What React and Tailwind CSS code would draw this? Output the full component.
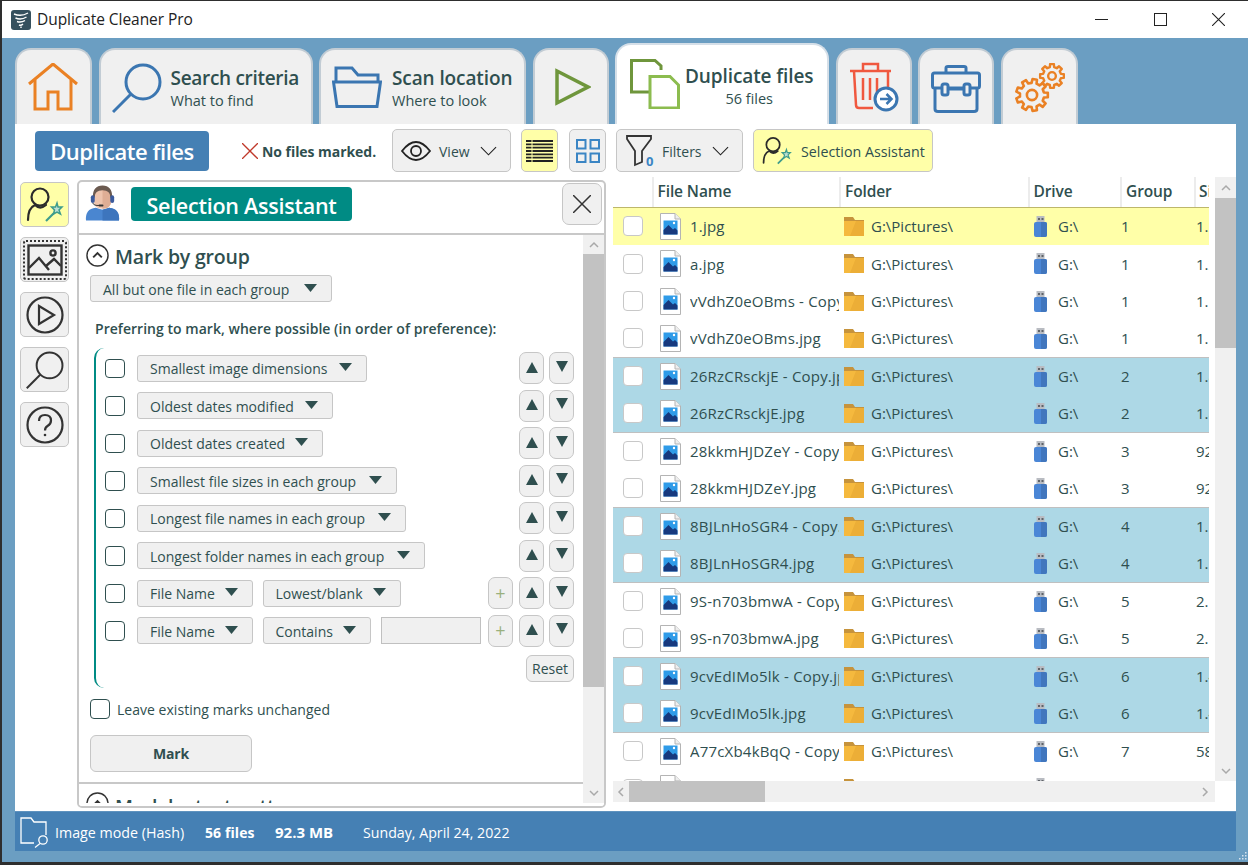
import React from "react";

const FONT = "[font-family:'Open_Sans','Noto_Sans',sans-serif]";
const INK = "text-[#2f4f4f]";
const BTN = "bg-[#f0f0f0] border border-[#c6c6c6] rounded-[5px]";

function Caret() {
  return (
    <svg viewBox="0 0 13 8" className="w-[13px] h-[8px] shrink-0 -mt-[2px]">
      <path d="M0 0H13L6.5 8Z" fill="#2f4f4f" />
    </svg>
  );
}
function Tri({ up }) {
  return (
    <svg viewBox="0 0 12 11" className={"w-[12px] h-[11px] shrink-0 " + (up ? "-mt-[2px]" : "-mt-[4px]")}>
      <path d={up ? "M6 0L12 11H0Z" : "M0 0H12L6 11Z"} fill="#2f4f4f" />
    </svg>
  );
}

function Gear({ cx, cy, r, teeth = 8, color = "#ea8124", w = 2 }) {
  const pts = [];
  const outer = r;
  const inner = r * 0.76;
  const step = (Math.PI * 2) / teeth;
  for (let i = 0; i < teeth; i++) {
    const a = i * step;
    const d = step * 0.2;
    const e = step * 0.3;
    pts.push([a - e, inner], [a - d, outer], [a + d, outer], [a + e, inner]);
  }
  const s = pts.map(([a, q]) => `${(cx + q * Math.cos(a)).toFixed(2)},${(cy + q * Math.sin(a)).toFixed(2)}`).join(" ");
  return (
    <g fill="none" stroke={color} strokeWidth={w} strokeLinejoin="round">
      <polygon points={s} />
      <circle cx={cx} cy={cy} r={r * 0.32} />
    </g>
  );
}

const HomeIcon = () => (
  <svg viewBox="0 0 50 48" className="w-[50px] h-[48px]" fill="none" stroke="#ea8124" strokeWidth="3">
    <path d="M1 21L25 1L49 21" />
    <path d="M7 17V46H20V29H30V46H43V17" />
  </svg>
);
const SearchIcon = ({ color = "#3b76b1", cls = "w-[50px] h-[50px]", w = 3 }) => (
  <svg viewBox="0 0 50 50" className={cls} fill="none" stroke={color} strokeWidth={w}>
    <circle cx="31" cy="19" r="17" />
    <path d="M19 31L1 49" />
  </svg>
);
const FolderIcon = () => (
  <svg viewBox="0 0 50 42" className="w-[50px] h-[42px]" fill="none" stroke="#3b76b1" strokeWidth="3">
    <path d="M4 16V2H20L26 9H46V16" />
    <path d="M1.5 16H48.5L45 40.5H5Z" />
  </svg>
);
const PlayIcon = () => (
  <svg viewBox="0 0 36 38" className="w-[36px] h-[38px]" fill="none" stroke="#6f963c" strokeWidth="3.5">
    <path d="M2 3L33 19L2 35Z" />
  </svg>
);
const DocsIcon = () => (
  <svg viewBox="0 0 50 50" className="w-[50px] h-[50px]" fill="none" strokeWidth="3">
    <path d="M31 11V7L25 1.5H1.5V33H19" stroke="#6f963c" />
    <path d="M20 17.5H40L48.5 26V49H20Z" stroke="#8cbc4f" fill="white" />
  </svg>
);
const TrashIcon = () => (
  <svg viewBox="0 0 50 50" className="w-[50px] h-[50px]" fill="none">
    <g stroke="#f0583f" strokeWidth="2.5">
      <path d="M1 9H42" />
      <path d="M14 9V2H29V9" />
      <path d="M5 9L7 43Q7 46 10 46H24" />
      <path d="M39 9V25" />
      <path d="M14 16V38M21 16V38M28 16V30" />
    </g>
    <circle cx="37" cy="37" r="11" fill="white" stroke="#3b76b1" strokeWidth="3" />
    <path d="M31 37H42M37.5 32L42.5 37L37.5 42" stroke="#3b76b1" strokeWidth="2.5" />
  </svg>
);
const CaseIcon = () => (
  <svg viewBox="0 0 50 48" className="w-[50px] h-[48px]" fill="none" stroke="#3b76b1" strokeWidth="3">
    <path d="M15 8V3Q15 1.5 17 1.5H33Q35 1.5 35 3V8" />
    <rect x="1.5" y="8" width="47" height="15" rx="2" />
    <path d="M4 23V44Q4 46.5 7 46.5H43Q46 46.5 46 44V23" />
    <rect x="11" y="19" width="6" height="11" rx="2" fill="#f0f0f0" />
    <rect x="33" y="19" width="6" height="11" rx="2" fill="#f0f0f0" />
    <path d="M17 24H33" />
  </svg>
);
const GearsIcon = () => (
  <svg viewBox="0 0 50 50" className="w-[50px] h-[50px]">
    <Gear cx={17} cy={32} r={16} teeth={9} w={2.6} />
    <Gear cx={37} cy={13} r={12} teeth={8} w={2.4} />
  </svg>
);

function Tab({ w, active, children }) {
  return (
    <div className={w + " shrink-0 border-2 border-b-0 rounded-t-[16px] flex items-start " + (active ? "h-[81px] bg-white border-[#d5dfe8]" : "h-[76px] bg-[#f0f0f0] border-[#c2ccd4]")}>
      {children}
    </div>
  );
}

const Wizard = ({ cls }) => (
  <svg viewBox="0 0 38 36" className={cls} fill="none">
    <circle cx="14" cy="10" r="8.5" stroke="#2b2b2b" strokeWidth="2.2" />
    <path d="M2 33Q2 21 9 18Q14 23 20 18" stroke="#2b2b2b" strokeWidth="2.2" strokeLinecap="round" />
    <path d="M20 34L28 26" stroke="#3e9c8c" strokeWidth="2.2" />
    <path d="M31 16L32 20L36 20L33 23L34.5 27L31 25L27.5 27L28.5 23L25.5 20L29.5 20Z" stroke="#3e9c8c" strokeWidth="1.5" fill="#bde0d4" />
  </svg>
);
const ImageIcon = () => (
  <svg viewBox="0 0 36 32" className="w-[36px] h-[32px]" fill="none" stroke="#333" strokeWidth="2.4">
    <rect x="1.5" y="1.5" width="33" height="29" />
    <circle cx="26" cy="9" r="2.6" />
    <path d="M2 24L12 14L22 26M19 22L27 15L34 22" />
  </svg>
);
const PlayCircle = () => (
  <svg viewBox="0 0 38 38" className="w-[38px] h-[38px]" fill="none" stroke="#333" strokeWidth="2.2">
    <circle cx="19" cy="19" r="17.5" />
    <path d="M13 10L28 19L13 28Z" />
  </svg>
);
const HelpCircle = () => (
  <svg viewBox="0 0 38 38" className="w-[38px] h-[38px]" fill="none" stroke="#333" strokeWidth="2.2">
    <circle cx="19" cy="19" r="17.5" />
    <path d="M13 15Q13 9 19 9Q25 9 25 14.5Q25 18 21.5 20Q19 21.5 19 24.5" />
    <circle cx="19" cy="29" r="1.3" fill="#333" stroke="none" />
  </svg>
);
const Agent = () => (
  <svg viewBox="0 0 36 36" className="w-[35px] h-[36px]">
    <path d="M1 36Q0 24 11 23L18 25L25 23Q36 24 35 36Z" fill="#4a86d0" />
    <path d="M18 25L25 23Q36 24 35 36H18Z" fill="#3d75bd" />
    <path d="M9 11Q9 1 18 1Q27 1 27 11V15Q27 24 18 24Q9 24 9 15Z" fill="#eec4ad" />
    <path d="M18 1Q27 1 27 11V15Q27 24 18 24Z" fill="#dfae95" />
    <path d="M8 12Q8 0 18 0Q28 0 28 12H26Q26 5 18 5Q10 5 10 12Z" fill="#6b5a50" />
    <rect x="6" y="10" width="4" height="8" rx="2" fill="#3a5a9c" />
    <rect x="26" y="10" width="4" height="8" rx="2" fill="#3a5a9c" />
    <path d="M8 18Q9 21 15 20.5" stroke="#333" strokeWidth="1" fill="none" />
    <rect x="14" y="19.5" width="5" height="2" rx="1" fill="#333" />
  </svg>
);
const ChevCircle = () => (
  <svg viewBox="0 0 24 24" className="w-[23px] h-[23px] shrink-0" fill="none" stroke="#333" strokeWidth="1.5">
    <circle cx="12" cy="12" r="11" />
    <path d="M7.5 14L12 9.5L16.5 14" strokeWidth="2" />
  </svg>
);
const Chevron = ({ dir = "up", color = "#a9a9a9", cls = "w-[10px] h-[10px]" }) => {
  const d = { up: "M1 7L5 3L9 7", down: "M1 3L5 7L9 3", left: "M7 1L3 5L7 9", right: "M3 1L7 5L3 9" }[dir];
  return (
    <svg viewBox="0 0 10 10" className={cls} fill="none" stroke={color} strokeWidth="1.5">
      <path d={d} />
    </svg>
  );
};
const FileImg = () => (
  <svg viewBox="0 0 21 27" className="w-[21px] h-[27px] shrink-0">
    <path d="M.5.5H15L20.5 6V26.5H.5Z" fill="#fff" stroke="#b4b4b4" />
    <path d="M15 .5V6H20.5" fill="#eee" stroke="#b4b4b4" />
    <rect x="3.5" y="7.5" width="14" height="14" fill="#2f9be8" />
    <path d="M3.5 21.5V17L8.5 12L13 16.5L15 15L17.5 17.5V21.5Z" fill="#17397e" />
    <circle cx="14" cy="10" r="1.2" fill="#fff" />
  </svg>
);
const FolderYellow = () => (
  <svg viewBox="0 0 20 19" className="w-[20px] h-[19px] shrink-0">
    <path d="M0 0H9L11 3H20V6H0Z" fill="#c6933c" />
    <rect y="4" width="20" height="15" fill="#f5b93e" />
    <path d="M12 4H20V19H6Z" fill="#ecae37" />
  </svg>
);
const Usb = () => (
  <svg viewBox="0 0 13 21" className="w-[13px] h-[21px] shrink-0">
    <rect x="2.5" y="0" width="8" height="7" fill="#b9bcc2" />
    <rect x="4" y="2" width="2" height="2" fill="#5f6368" />
    <rect x="7.5" y="2" width="2" height="2" fill="#5f6368" />
    <path d="M0 8Q0 6 2 6H11Q13 6 13 8V19Q13 21 11 21H2Q0 21 0 19Z" fill="#4a86d6" />
    <path d="M7 6H11Q13 6 13 8V19Q13 21 11 21H7Z" fill="#4176bd" />
  </svg>
);

function Dropdown({ w, children }) {
  return (
    <div className={w + " h-[27px] shrink-0 flex items-center justify-between pl-[12px] pr-[14px] bg-[#f0f0f0] border border-[#c6c6c6] rounded-[3px] text-[14px] whitespace-nowrap " + INK}>
      <span className="pt-[1px]">{children}</span>
      <Caret />
    </div>
  );
}
const Check = () => <div className="w-[19.5px] h-[19.5px] shrink-0 bg-white border-[1.5px] border-[#2f4f4f] rounded-[4px]" />;

function Arrows({ plus }) {
  const b = "w-[25px] h-[32px] shrink-0 flex items-center justify-center " + BTN + " rounded-[7px]";
  return (
    <div className="ml-auto flex items-center gap-[5px]">
      {plus && <div className={b + " mr-[1px] text-[18px] text-[#9ab07e]"}>+</div>}
      <div className={b}><Tri up /></div>
      <div className={b}><Tri /></div>
    </div>
  );
}

const rules = [
  ["w-[230px]", "Smallest image dimensions"],
  ["w-[196px]", "Oldest dates modified"],
  ["w-[186px]", "Oldest dates created"],
  ["w-[260px]", "Smallest file sizes in each group"],
  ["w-[269px]", "Longest file names in each group"],
  ["w-[288px]", "Longest folder names in each group"],
];

const files = [
  ["1.jpg", 1, "1.2 MB", "y", ""],
  ["a.jpg", 1, "1.2 MB", "", ""],
  ["vVdhZ0eOBms - Copy.jpg", 1, "1.1 MB", "", ""],
  ["vVdhZ0eOBms.jpg", 1, "1.1 MB", "", "l"],
  ["26RzCRsckjE - Copy.jpg", 2, "1.8 MB", "b", ""],
  ["26RzCRsckjE.jpg", 2, "1.8 MB", "b", "l"],
  ["28kkmHJDZeY - Copy.jpg", 3, "92 KB", "", ""],
  ["28kkmHJDZeY.jpg", 3, "92 KB", "", "l"],
  ["8BJLnHoSGR4 - Copy.jpg", 4, "1.5 MB", "b", ""],
  ["8BJLnHoSGR4.jpg", 4, "1.5 MB", "b", "l"],
  ["9S-n703bmwA - Copy.jpg", 5, "2.1 MB", "", ""],
  ["9S-n703bmwA.jpg", 5, "2.1 MB", "", "l"],
  ["9cvEdIMo5lk - Copy.jpg", 6, "1.4 MB", "b", ""],
  ["9cvEdIMo5lk.jpg", 6, "1.4 MB", "b", "l"],
  ["A77cXb4kBqQ - Copy.jpg", 7, "58 KB", "", ""],
  ["A77cXb4kBqQ.jpg", 7, "58 KB", "", ""],
];

function Row({ f }) {
  const bg = f[3] === "y" ? "bg-[#ffffa8]" : f[3] === "b" ? "bg-[#add8e6]" : "bg-white";
  return (
    <div className={"h-[37.5px] shrink-0 flex items-center text-[15px] whitespace-nowrap " + bg + " " + INK + (f[4] ? " border-b border-[#c0c0c0]" : "")}>
      <div className="w-[47px] shrink-0 pl-[10px]">
        <div className="w-[20px] h-[20px] bg-white border border-[#c8c8c8] rounded-[4px]" />
      </div>
      <FileImg />
      <div className="w-[149px] shrink-0 ml-[9px] mr-[5px] overflow-hidden tracking-[0.2px]">{f[0]}</div>
      <div className="w-[187px] shrink-0 flex items-center gap-[7px] overflow-hidden">
        <FolderYellow />
        <span>G:\Pictures\</span>
      </div>
      <div className="w-[90px] shrink-0 pl-[3px] flex items-center gap-[11px]">
        <Usb />
        <span>G:\</span>
      </div>
      <div className="w-[75px] shrink-0">{f[1]}</div>
      <div className="w-[40px] shrink-0">{f[2]}</div>
    </div>
  );
}

export default function App() {
  return (
    <div className={"w-[1248px] h-[865px] overflow-hidden flex flex-col bg-[#6b9ec2] border-t border-l-2 border-b-[3px] border-[#2e2e2e] " + FONT}>
      {/* title bar */}
      <div className="h-[37px] shrink-0 bg-white flex items-center pl-[9px] pr-[23px] text-[#222]">
        <svg viewBox="0 0 20 20" className="w-[20px] h-[20px]">
          <rect width="20" height="20" rx="3" fill="#35505e" />
          <path d="M3 4Q10 7 17 3M4.5 8Q10 10.5 15.5 7M6 11.5Q10 13 14 10.5M8 15Q10 16 12 14M10 16.5V18" stroke="#fff" strokeWidth="1.4" fill="none" />
        </svg>
        <span className="ml-[6px] text-[15.5px] tracking-[-0.05px]">Duplicate Cleaner Pro</span>
        <div className="ml-auto flex items-center gap-[45.5px]">
          <div className="w-[13px] h-[1.5px] bg-[#222]" />
          <div className="w-[13px] h-[13px] border border-[#222]" />
          <svg viewBox="0 0 13 13" className="w-[13px] h-[13px]" stroke="#222" strokeWidth="1.1"><path d="M0 0L13 13M13 0L0 13" /></svg>
        </div>
      </div>

      {/* tabs */}
      <div className="h-[86px] shrink-0 flex items-end gap-[6.5px] pl-[13px]">
        <Tab w="w-[77px]"><div className="ml-[11px] mt-[13px]"><HomeIcon /></div></Tab>
        <Tab w="w-[214px]">
          <div className="ml-[11px] mt-[12px]"><SearchIcon cls="w-[50px] h-[52px]" /></div>
          <div className={"ml-[9px] mt-[15px] " + INK}>
            <div className="text-[19px] font-semibold leading-[26px] tracking-[-0.3px] whitespace-nowrap">Search criteria</div>
            <div className="text-[14.5px] leading-[19px] whitespace-nowrap">What to find</div>
          </div>
        </Tab>
        <Tab w="w-[207px]">
          <div className="ml-[11px] mt-[16px]"><FolderIcon /></div>
          <div className={"ml-[10px] mt-[15px] " + INK}>
            <div className="text-[19px] font-semibold leading-[26px] tracking-[-0.1px] whitespace-nowrap">Scan location</div>
            <div className="text-[14.5px] leading-[19px] whitespace-nowrap">Where to look</div>
          </div>
        </Tab>
        <Tab w="w-[76px]"><div className="ml-[20px] mt-[18px]"><PlayIcon /></div></Tab>
        <Tab w="w-[214px]" active>
          <div className="ml-[13px] mt-[14px]"><DocsIcon /></div>
          <div className={"ml-[5px] mt-[18px] text-center " + INK}>
            <div className="text-[19px] font-semibold leading-[26px] tracking-[-0.1px] whitespace-nowrap">Duplicate files</div>
            <div className="text-[14.5px] leading-[20px] whitespace-nowrap">56 files</div>
          </div>
        </Tab>
        <Tab w="w-[76px]"><div className="ml-[11px] mt-[12px]"><TrashIcon /></div></Tab>
        <Tab w="w-[76px]"><div className="ml-[11px] mt-[15px]"><CaseIcon /></div></Tab>
        <Tab w="w-[77px]"><div className="ml-[12px] mt-[13px]"><GearsIcon /></div></Tab>
      </div>

      {/* content */}
      <div className="w-[1221px] ml-[13px] h-[687px] shrink-0 bg-white flex flex-col">
        {/* toolbar */}
        <div className="h-[53px] shrink-0 flex items-center pl-[20px]">
          <div className="w-[174px] h-[40px] pt-[2px] flex items-center justify-center bg-[#4580b4] rounded-[4px] text-white text-[22px] font-semibold tracking-[-0.45px] whitespace-nowrap">Duplicate files</div>
          <svg viewBox="0 0 16 16" className="w-[16px] h-[16px] ml-[33px]" stroke="#c0392b" strokeWidth="1.3"><path d="M0 0L16 16M16 0L0 16" /></svg>
          <span className={"ml-[4px] w-[115px] pt-[1px] text-[14px] font-bold tracking-[-0.05px] whitespace-nowrap " + INK}>No files marked.</span>
          <div className={"ml-[15px] w-[119px] h-[43px] flex items-center pl-[8px] " + BTN + " " + INK}>
            <svg viewBox="0 0 30 20" className="w-[30px] h-[20px]" fill="none" stroke="#222" strokeWidth="1.8">
              <path d="M1 10Q8 1 15 1Q22 1 29 10Q22 19 15 19Q8 19 1 10Z" />
              <circle cx="15" cy="10" r="5" />
            </svg>
            <span className="ml-[8px] pt-[2px] text-[14px]">View</span>
            <svg viewBox="0 0 18 10" className="w-[17px] h-[10px] ml-[10px]" fill="none" stroke="#222" strokeWidth="1.2"><path d="M1 1L9 9L17 1" /></svg>
          </div>
          <div className="ml-[10px] w-[37px] h-[43px] flex items-center justify-center bg-[#ffffa8] border border-[#c6c6c6] rounded-[5px]">
            <svg viewBox="0 0 27 22" className="w-[27px] h-[22px]" stroke="#222" strokeWidth="1.8">
              <path d="M0 1H27M0 4.3H27M0 7.7H27M0 11H27M0 14.3H27M0 17.7H27M0 21H27" />
              <path d="M6 0V22" stroke="#ffffa8" strokeWidth="1" />
            </svg>
          </div>
          <div className={"ml-[11px] w-[37px] h-[43px] flex items-center justify-center " + BTN}>
            <svg viewBox="0 0 24 24" className="w-[24px] h-[24px]" fill="none" stroke="#3a85c4" strokeWidth="2">
              <rect x="1" y="1" width="8.5" height="8.5" />
              <rect x="14.5" y="1" width="8.5" height="8.5" />
              <rect x="1" y="14.5" width="8.5" height="8.5" />
              <rect x="14.5" y="14.5" width="8.5" height="8.5" />
            </svg>
          </div>
          <div className={"ml-[10px] w-[127px] h-[43px] flex items-center pl-[9px] " + BTN + " " + INK}>
            <svg viewBox="0 0 29 32" className="w-[29px] h-[32px]" fill="none">
              <path d="M1 1H25V4L16 16V27L9 30V16L1 4Z" stroke="#333" strokeWidth="1.8" />
              <text x="20" y="31" fontSize="13" fontWeight="700" fill="#3a85c4">0</text>
            </svg>
            <span className="ml-[7px] pt-[2px] text-[14px]">Filters</span>
            <svg viewBox="0 0 18 10" className="w-[17px] h-[10px] ml-[10px]" fill="none" stroke="#222" strokeWidth="1.2"><path d="M1 1L9 9L17 1" /></svg>
          </div>
          <div className={"ml-[10px] w-[180px] h-[43px] flex items-center pl-[8px] bg-[#ffffa8] border border-[#c6c6c6] rounded-[5px] " + INK}>
            <Wizard cls="w-[30px] h-[30px]" />
            <span className="ml-[9px] pt-[2px] text-[14.25px] whitespace-nowrap">Selection Assistant</span>
          </div>
        </div>

        {/* main */}
        <div className="flex-1 min-h-0 flex pl-[5px]">
          {/* side */}
          <div className="w-[49px] shrink-0 pt-[5px] flex flex-col gap-[10px]">
            <div className="h-[45px] flex items-center justify-center bg-[#ffffa8] border border-[#c6c6c6] rounded-[5px]"><Wizard cls="w-[38px] h-[36px]" /></div>
            <div className={"h-[45px] flex items-center justify-center " + BTN}>
              <div className="p-[2px] border-2 border-dotted border-[#333] rounded-[3px] flex"><ImageIcon /></div>
            </div>
            <div className={"h-[45px] flex items-center justify-center " + BTN}><PlayCircle /></div>
            <div className={"h-[45px] flex items-center justify-center " + BTN}><SearchIcon color="#333" cls="w-[38px] h-[38px]" w={2.6} /></div>
            <div className={"h-[45px] flex items-center justify-center " + BTN}><HelpCircle /></div>
          </div>

          {/* selection panel */}
          <div className="ml-[8px] mt-[3px] w-[529px] h-[628px] shrink-0 border-2 border-[#c8c8c8] rounded-[5px] flex flex-col overflow-hidden">
            <div className="h-[53px] shrink-0 border-b-2 border-[#c8c8c8] flex items-start pl-[6px] pr-[2px]">
              <div className="mt-[3px]"><Agent /></div>
              <div className="mt-[5px] pt-[4px] ml-[11px] w-[221px] h-[34px] flex items-center justify-center bg-[#008b84] rounded-[4px] text-white text-[21.5px] font-semibold tracking-[-0.25px] whitespace-nowrap">Selection Assistant</div>
              <div className="mt-[1px] ml-auto w-[40px] h-[42px] flex items-center justify-center bg-[#f0f0f0] border border-[#c6c6c6] rounded-[7px]">
                <svg viewBox="0 0 18 18" className="w-[18px] h-[18px]" stroke="#333" strokeWidth="1.5"><path d="M0 0L18 18M18 0L0 18" /></svg>
              </div>
            </div>
            <div className="flex-1 min-h-0 flex">
              <div className="flex-1 min-w-0 overflow-hidden">
                <div className="flex items-center pl-[7px] pt-[9px] h-[32px]">
                  <ChevCircle />
                  <span className={"ml-[6px] pt-[2px] text-[19.5px] font-semibold tracking-[-0.2px] whitespace-nowrap " + INK}>Mark by group</span>
                </div>
                <div className={"ml-[11px] mt-[8px] w-[242px] h-[27px] flex items-center justify-between pl-[12px] pr-[14px] bg-[#f0f0f0] border border-[#c6c6c6] rounded-[3px] text-[14px] whitespace-nowrap " + INK}>
                  <span className="pt-[1px]">All but one file in each group</span>
                  <Caret />
                </div>
                <div className={"ml-[16px] mt-[16px] h-[20px] flex items-center text-[14px] font-semibold tracking-[0.03px] whitespace-nowrap " + INK}>Preferring to mark, where possible (in order of preference):</div>

                <div className="ml-[15px] mt-[10px] h-[340px] border-l-2 border-[#008b84] rounded-l-[10px] pt-[1.5px] pl-[9px] pr-[9px] flex flex-col">
                  {rules.map(([w, t]) => (
                    <div key={t} className="h-[37.5px] shrink-0 flex items-center gap-[12.5px]">
                      <Check />
                      <Dropdown w={w}>{t}</Dropdown>
                      <Arrows />
                    </div>
                  ))}
                  <div className="h-[37.5px] shrink-0 flex items-center gap-[12.5px]">
                    <Check />
                    <Dropdown w="w-[116px]">File Name</Dropdown>
                    <div className="-ml-[3px]"><Dropdown w="w-[138px]">Lowest/blank</Dropdown></div>
                    <Arrows plus />
                  </div>
                  <div className="h-[37.5px] shrink-0 flex items-center gap-[12.5px]">
                    <Check />
                    <Dropdown w="w-[116px]">File Name</Dropdown>
                    <div className="-ml-[3px]"><Dropdown w="w-[108px]">Contains</Dropdown></div>
                    <div className="-ml-[2.5px] -mr-[12.5px] w-[100px] h-[27px] shrink-0 bg-[#f0f0f0] border border-[#c0c0c0]" />
                    <Arrows plus />
                  </div>
                  <div className="flex justify-end mt-[5px]">
                    <div className={"w-[48px] h-[27px] pt-[1px] flex items-center justify-center text-[14px] rounded-[6px] " + BTN + " " + INK}>Reset</div>
                  </div>
                </div>

                <div className="ml-[11px] mt-[11px] flex items-center h-[20px]">
                  <Check />
                  <span className={"ml-[7.5px] pt-[1px] text-[14px] tracking-[0.03px] whitespace-nowrap " + INK}>Leave existing marks unchanged</span>
                </div>
                <div className={"ml-[11px] mt-[16px] w-[162px] h-[37px] flex items-center justify-center text-[14px] font-bold tracking-[-0.2px] rounded-[6px] " + BTN + " " + INK}>Mark</div>
                <div className="mt-[10px] border-t-2 border-[#c8c8c8] pl-[7px] pt-[8px] flex items-start">
                  <ChevCircle />
                  <span className={"ml-[6px] text-[19.5px] font-semibold tracking-[-0.2px] whitespace-nowrap " + INK}>Mark by text pattern</span>
                </div>
              </div>
              {/* scrollbar */}
              <div className="w-[21px] shrink-0 bg-[#f0f0f0] flex flex-col">
                <div className="h-[19px] shrink-0 flex items-center justify-center"><Chevron dir="up" /></div>
                <div className="h-[433px] shrink-0 bg-[#c2c2c2]" />
                <div className="flex-1" />
                <div className="h-[20px] shrink-0 flex items-center justify-center"><Chevron dir="down" /></div>
              </div>
            </div>
            <div className="h-[3px] shrink-0 bg-white" />
          </div>

          {/* grid */}
          <div className="ml-[7px] w-[623px] shrink-0 flex flex-col">
            <div className="h-[604px] shrink-0 flex">
              <div className="w-[596px] shrink-0 overflow-hidden flex flex-col">
                <div className={"h-[30.5px] shrink-0 flex items-center border-b border-[#bdb76b] text-[15.5px] font-semibold tracking-[-0.1px] whitespace-nowrap " + INK}>
                  <div className="w-[41px] shrink-0 h-full border-r-2 border-[#ececec]" />
                  <div className="w-[187px] shrink-0 pl-[3.5px] h-full flex items-center border-r-2 border-[#ececec]">File Name</div>
                  <div className="w-[189px] shrink-0 pl-[4px] h-full flex items-center border-r-2 border-[#ececec]">Folder</div>
                  <div className="w-[92px] shrink-0 pl-[3.5px] h-full flex items-center border-r-2 border-[#ececec]">Drive</div>
                  <div className="w-[74px] shrink-0 pl-[4px] h-full flex items-center border-r-2 border-[#ececec]">Group</div>
                  <div className="pl-[3px]">Size</div>
                </div>
                <div className="flex-1 min-h-0 overflow-hidden">
                  {files.map((f) => <Row key={f[0]} f={f} />)}
                </div>
              </div>
              <div className="ml-[6px] w-[21px] shrink-0 bg-[#f0f0f0] flex flex-col">
                <div className="h-[21px] shrink-0 flex items-center justify-center"><Chevron dir="up" /></div>
                <div className="h-[150px] shrink-0 bg-[#c2c2c2]" />
                <div className="flex-1" />
                <div className="h-[21px] shrink-0 flex items-center justify-center"><Chevron dir="down" /></div>
              </div>
            </div>
            <div className="h-[21px] w-[602px] shrink-0 bg-[#f0f0f0] flex items-center">
              <div className="w-[16px] shrink-0 flex justify-center"><Chevron dir="left" /></div>
              <div className="w-[136px] h-full shrink-0 bg-[#c2c2c2]" />
              <div className="ml-auto w-[21px] flex justify-center"><Chevron dir="right" /></div>
            </div>
          </div>
        </div>
      </div>

      {/* status */}
      <div className="w-[1221px] ml-[13px] h-[40px] shrink-0 bg-[#4580b4] border-t border-[#5f93bf] flex items-center pl-[5px] text-white text-[14px] whitespace-nowrap">
        <svg viewBox="0 0 30 32" className="w-[30px] h-[32px]" fill="none" stroke="#fff" strokeWidth="1.3">
          <path d="M14 27H1V2H11L14 6H26V19" />
          <circle cx="23" cy="24" r="4.2" />
          <path d="M20 27.5L15 31.5" />
        </svg>
        <span className="ml-[5px] pt-[2px] w-[150px] text-[14.25px]">Image mode (Hash)</span>
        <span className="w-[70px] pt-[2px] font-bold tracking-[0.1px]">56 files</span>
        <span className="w-[88px] pt-[2px] text-[15px] font-bold">92.3 MB</span>
        <span className="pt-[2px] text-[14.2px]">Sunday, April 24, 2022</span>
      </div>
      {/* footer + grip */}
      <div className="flex-1 flex justify-end items-end pr-[1px]">
        <svg viewBox="0 0 10 10" className="w-[10px] h-[10px]" fill="#d8e4ee">
          <rect x="8" y="0" width="1.5" height="1.5" />
          <rect x="8" y="3" width="1.5" height="1.5" /><rect x="5" y="3" width="1.5" height="1.5" />
          <rect x="8" y="6" width="1.5" height="1.5" /><rect x="5" y="6" width="1.5" height="1.5" /><rect x="2" y="6" width="1.5" height="1.5" />
        </svg>
      </div>
    </div>
  );
}
